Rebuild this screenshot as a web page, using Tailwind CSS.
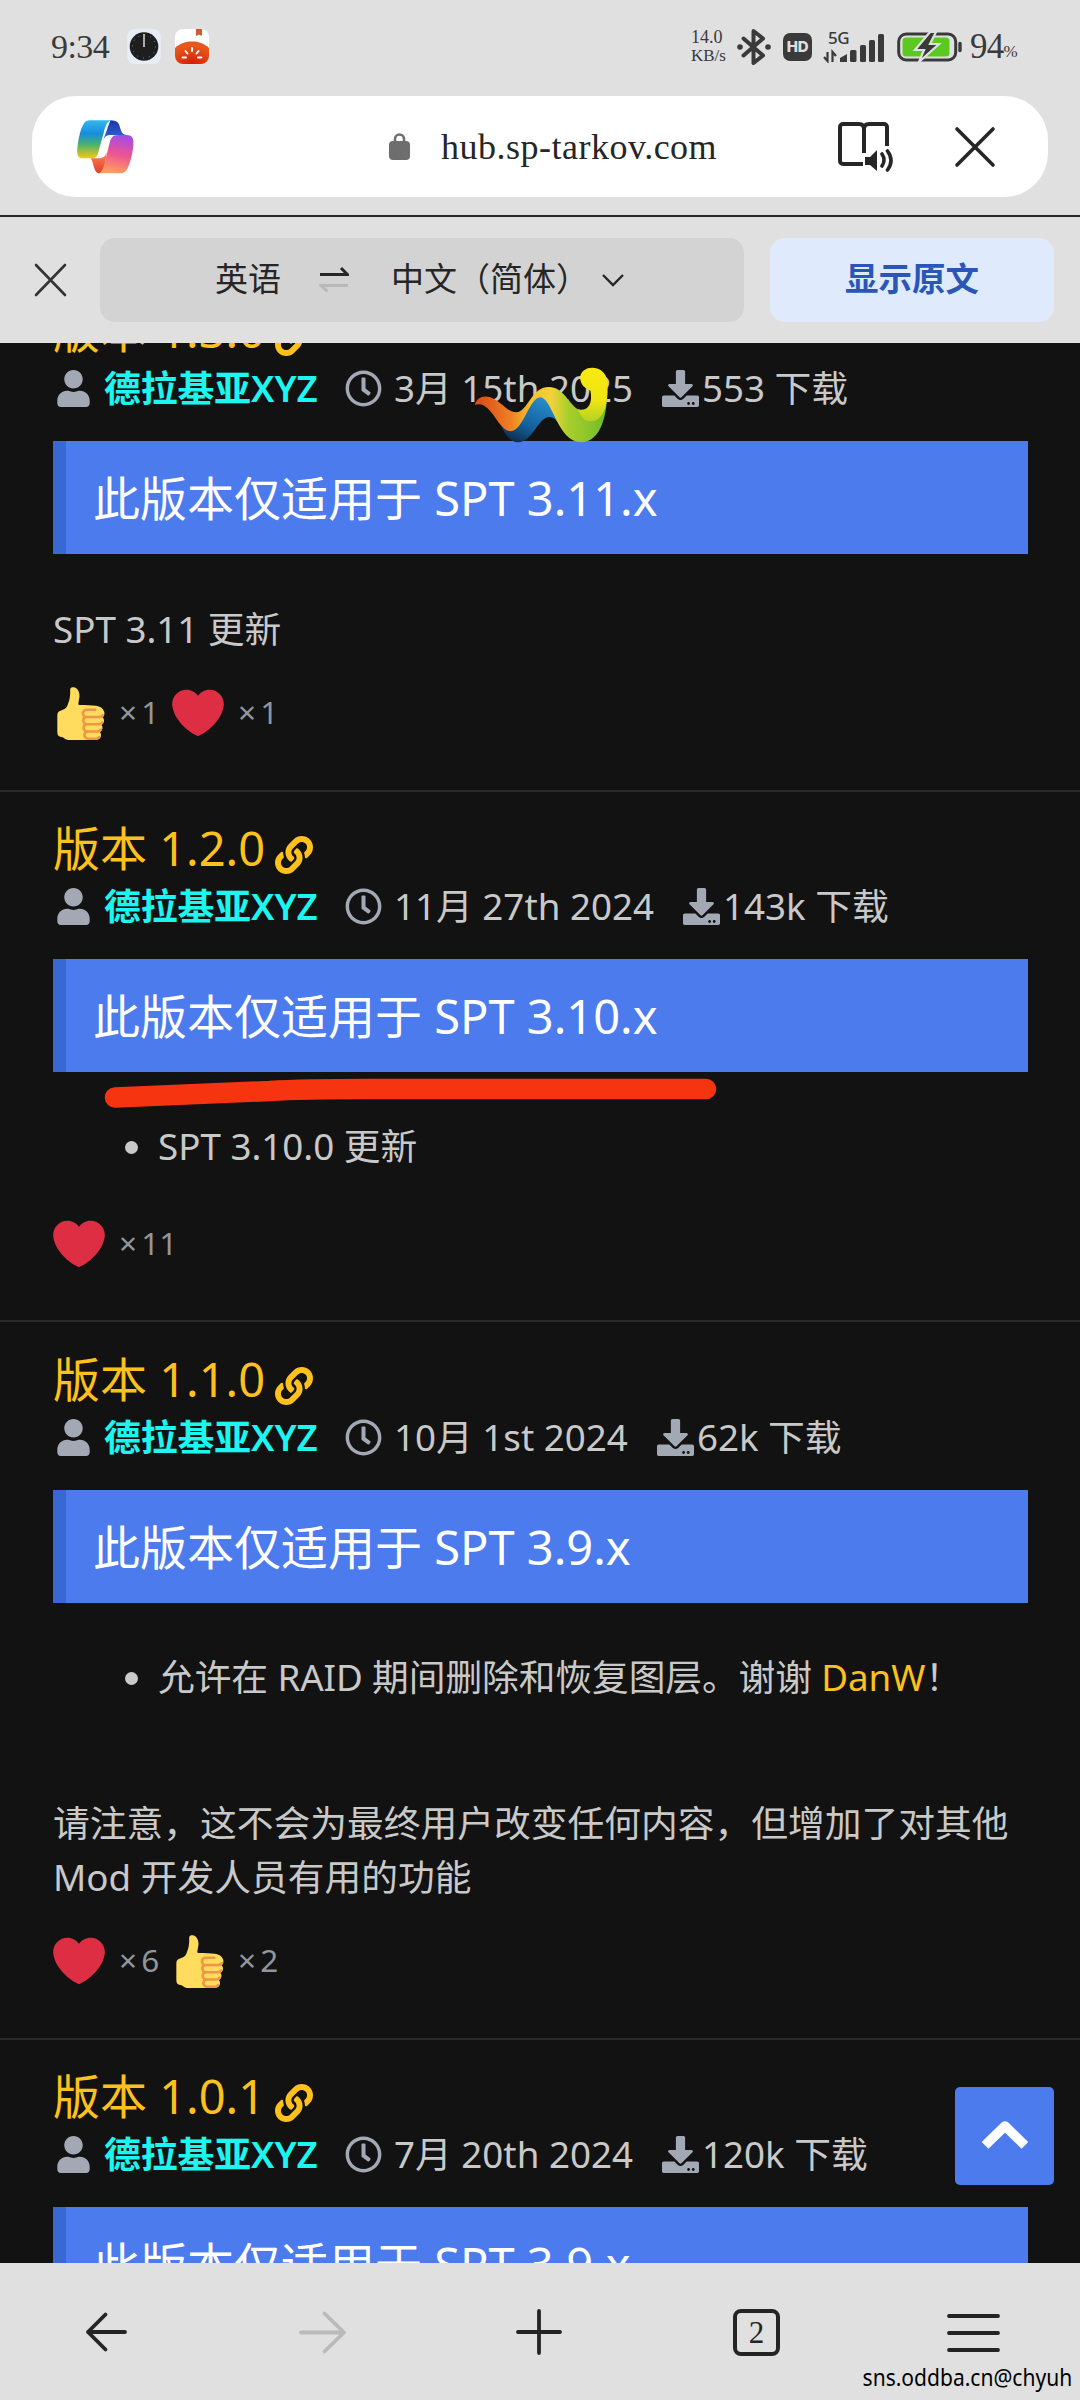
<!DOCTYPE html>
<html lang="zh-CN">
<head>
<meta charset="utf-8">
<title>hub.sp-tarkov.com</title>
<script src="https://cdn.jsdelivr.net/npm/@tailwindcss/browser@4"></script>
</head>
<body class="bg-[#121212]">
<!-- shared icons -->
<svg class="hidden">
  <symbol id="user" viewBox="0 0 448 512"><path fill="currentColor" d="M224 256c70.7 0 128-57.3 128-128S294.7 0 224 0 96 57.3 96 128s57.3 128 128 128zm89.6 32h-16.7c-22.2 10.2-46.9 16-72.9 16s-50.6-5.8-72.9-16h-16.7C60.2 288 0 348.2 0 422.4V464c0 26.5 21.5 48 48 48h352c26.5 0 48-21.5 48-48v-41.6c0-74.2-60.2-134.4-134.4-134.4z"/></symbol>
  <symbol id="clock" viewBox="0 0 512 512"><path fill="currentColor" d="M256 8C119 8 8 119 8 256s111 248 248 248 248-111 248-248S393 8 256 8zm0 448c-110.5 0-200-89.5-200-200S145.5 56 256 56s200 89.5 200 200-89.5 200-200 200zm61.8-104.4l-84.9-61.7c-3.1-2.3-4.9-5.9-4.9-9.7V116c0-6.6 5.4-12 12-12h32c6.6 0 12 5.4 12 12v141.7l66.8 48.6c5.4 3.9 6.5 11.4 2.6 16.8L334.6 349c-3.9 5.3-11.4 6.5-16.8 2.6z"/></symbol>
  <symbol id="download" viewBox="0 0 512 512"><path fill="currentColor" d="M216 0h80c13.3 0 24 10.7 24 24v168h87.7c17.8 0 26.7 21.5 14.1 34.1L269.7 378.3c-7.5 7.5-19.8 7.5-27.3 0L90.1 226.1c-12.6-12.6-3.7-34.1 14.1-34.1H192V24c0-13.3 10.7-24 24-24zm296 376v112c0 13.3-10.7 24-24 24H24c-13.3 0-24-10.7-24-24V376c0-13.3 10.7-24 24-24h146.7l49 49c20.1 20.1 52.5 20.1 72.6 0l49-49H488c13.3 0 24 10.7 24 24zm-124 88c0-11-9-20-20-20s-20 9-20 20 9 20 20 20 20-9 20-20zm64 0c0-11-9-20-20-20s-20 9-20 20 9 20 20 20 20-9 20-20z"/></symbol>
  <symbol id="link" viewBox="0 0 512 512"><path fill="currentColor" d="M326.612 185.391c59.747 59.809 58.927 155.698.36 214.59-.11.12-.24.25-.36.37l-67.2 67.2c-59.27 59.27-155.699 59.262-214.96 0-59.27-59.26-59.27-155.7 0-214.96l37.106-37.106c9.84-9.84 26.786-3.3 27.294 10.606.648 17.722 3.826 35.527 9.69 52.721 1.986 5.822.567 12.262-3.783 16.612l-13.087 13.087c-28.026 28.026-28.905 73.66-1.155 101.96 28.024 28.579 74.086 28.749 102.325.51l67.2-67.19c28.191-28.191 28.073-73.757 0-101.83-3.701-3.694-7.429-6.564-10.341-8.569a16.037 16.037 0 0 1-6.947-12.606c-.396-10.567 3.348-21.456 11.698-29.806l21.054-21.055c5.521-5.521 14.182-6.199 20.584-1.731a152.482 152.482 0 0 1 20.522 17.197zM467.547 44.449c-59.261-59.262-155.69-59.27-214.96 0l-67.2 67.2c-.12.12-.25.25-.36.37-58.566 58.892-59.387 154.781.36 214.59a152.454 152.454 0 0 0 20.521 17.196c6.402 4.468 15.064 3.789 20.584-1.731l21.054-21.055c8.35-8.35 12.094-19.239 11.698-29.806a16.037 16.037 0 0 0-6.947-12.606c-2.912-2.005-6.64-4.875-10.341-8.569-28.073-28.073-28.191-73.639 0-101.83l67.2-67.19c28.239-28.239 74.3-28.069 102.325.51 27.75 28.3 26.872 73.934-1.155 101.96l-13.087 13.087c-4.35 4.35-5.769 10.79-3.783 16.612 5.864 17.194 9.042 34.999 9.69 52.721.509 13.906 17.454 20.446 27.294 10.606l37.106-37.106c59.271-59.259 59.271-155.699.001-214.959z"/></symbol>
  <symbol id="heart" viewBox="0 0 36 36"><path fill="#DD2E44" d="M35.885 11.833c0-5.45-4.418-9.868-9.867-9.868-3.308 0-6.227 1.633-8.018 4.129-1.791-2.496-4.71-4.129-8.017-4.129-5.45 0-9.868 4.417-9.868 9.868 0 .772.098 1.52.266 2.241C1.751 22.587 11.216 31.568 18 34.034c6.783-2.466 16.249-11.447 17.617-19.959.17-.721.268-1.469.268-2.242z"/></symbol>
  <symbol id="thumb" viewBox="0 0 36 36"><path fill="#FFDB5E" d="M34.956 17.916c0-.503-.12-.975-.321-1.404-1.341-4.326-7.619-4.01-16.549-4.221-1.493-.035-.639-1.798-.115-5.668.341-2.517-1.282-6.382-4.01-6.382-4.498 0-.171 3.548-4.148 12.322-2.125 4.688-6.875 2.062-6.875 6.771v10.719c0 1.833.18 3.595 2.758 3.885C8.195 34.219 7.633 36 11.238 36h18.044c1.838 0 3.333-1.496 3.333-3.334 0-.762-.267-1.456-.698-2.018 1.02-.571 1.72-1.649 1.72-2.899 0-.76-.266-1.454-.696-2.015 1.023-.57 1.725-1.649 1.725-2.901 0-.909-.368-1.733-.961-2.336.757-.611 1.251-1.535 1.251-2.581z"/><path fill="#EE9547" d="M23.02 21.249h8.604c1.17 0 2.268-.626 2.866-1.633.246-.415.109-.952-.307-1.199-.415-.247-.952-.108-1.199.307-.283.479-.806.775-1.361.775h-8.81c-.873 0-1.583-.71-1.583-1.583s.71-1.583 1.583-1.583H28.7c.483 0 .875-.392.875-.875s-.392-.875-.875-.875h-5.888c-1.838 0-3.333 1.495-3.333 3.333 0 1.025.475 1.932 1.205 2.544-.615.605-.998 1.445-.998 2.373 0 1.028.478 1.938 1.212 2.549-.611.604-.99 1.441-.99 2.367 0 1.12.559 2.108 1.409 2.713-.524.589-.852 1.356-.852 2.204 0 1.838 1.495 3.333 3.333 3.333h5.484c1.17 0 2.269-.625 2.867-1.632.247-.415.11-.952-.305-1.199-.416-.245-.953-.11-1.199.305-.285.479-.808.776-1.363.776h-5.484c-.873 0-1.583-.71-1.583-1.583s.71-1.583 1.583-1.583h6.506c1.17 0 2.27-.626 2.867-1.633.247-.416.11-.953-.305-1.199-.419-.251-.954-.11-1.199.305-.289.487-.799.777-1.363.777h-7.063c-.873 0-1.583-.711-1.583-1.584s.71-1.583 1.583-1.583h8.091c1.17 0 2.269-.625 2.867-1.632.247-.415.11-.952-.305-1.199-.417-.246-.953-.11-1.199.305-.289.486-.799.776-1.363.776H23.02c-.873 0-1.583-.71-1.583-1.583s.709-1.584 1.583-1.584z"/></symbol>
</svg>

<div class="relative flex h-[2400px] w-[1080px] flex-col overflow-hidden bg-[#121212] font-['Noto_Sans','Noto_Sans_CJK_SC',sans-serif] text-[36.75px] leading-[54px] text-[#c9c9c9]">

  <header class="relative z-10 flex h-[343px] shrink-0 flex-col bg-[#e0e0e0] font-['Liberation_Serif','Noto_Sans_CJK_SC',serif] text-[#262626]">
    <!-- status bar -->
    <div class="flex h-[93px] shrink-0 items-center pl-[51px] text-[#3a3a3a]">
      <span class="w-[76px] text-[34px] tracking-[-0.6px]">9:34</span>
      <svg class="h-[35px] w-[34px]" viewBox="0 0 34 35"><rect width="34" height="35" rx="8" fill="#e6edf6"/><circle cx="17" cy="17.5" r="14.3" fill="#1e1e20"/><circle cx="17" cy="17.5" r="11.5" fill="none" stroke="#8a8a8a" stroke-width="1" stroke-dasharray="1 5.02"/><path d="M17 5v13" stroke="#aaa" stroke-width="2"/></svg>
      <svg class="ml-[14px] h-[35px] w-[34px]" viewBox="0 0 34 35"><defs><radialGradient id="tomato" cx=".5" cy="1" r=".8"><stop offset="0" stop-color="#d41c06"/><stop offset="1" stop-color="#e8581c"/></radialGradient></defs><rect width="34" height="35" rx="8" fill="#fff"/><path d="M0 19C5 14 11 12.500 17 12.500S29 14 34 19v8a8 8 0 0 1-8 8H8a8 8 0 0 1-8-8z" fill="url(#tomato)"/><path d="M21 0h6v7l-3-1.500-3 1.500z" fill="#cd5a35"/><path d="M17 19v3M10.500 22l2 2.500M23.500 22l-2 2.500M7.500 28.500h3.500M26.500 28.500H23" stroke="#fff" stroke-width="2" stroke-linecap="round"/></svg>
      <div class="ml-[482px] w-[46px] text-[18px] leading-[18.5px]"><div>14.0</div><div class="text-[17px]">KB/s</div></div>
      <svg class="h-[36px] w-[34px]" viewBox="0 0 34 36"><path d="M6.500 9.500L26 26.500 16.500 34V2L26 9.500 6.500 26.500" fill="none" stroke="#3a3a3a" stroke-width="4" stroke-linejoin="round" stroke-linecap="round"/><circle cx="3" cy="18" r="2.800" fill="#3a3a3a"/><circle cx="31" cy="18" r="2.800" fill="#3a3a3a"/></svg>
      <span class="ml-[12px] flex h-[28px] w-[29px] items-center justify-center rounded-[7px] bg-[#3a3a3a] font-['Inter',sans-serif] text-[15px] font-extrabold leading-none tracking-[-0.3px] text-[#e0e0e0]">HD</span>
      <div class="relative ml-[11px] h-[32px] w-[62px]">
        <svg class="h-[32px] w-[62px]" viewBox="0 0 62 32"><g fill="#3a3a3a"><path d="M17 31v-4l7-4v8z"/><rect x="27" y="19" width="6.500" height="12" rx="1.500"/><rect x="37" y="14" width="6" height="17" rx="1.500"/><rect x="46" y="9" width="6" height="22" rx="1.500"/><rect x="55" y="3" width="6" height="28" rx="1.500"/></g><path d="M1 26l3.500 4V21M13 25l-3.500-4v10" fill="none" stroke="#3a3a3a" stroke-width="2.200"/></svg>
        <span class="absolute left-[5px] top-[-2px] font-['Noto_Sans',sans-serif] text-[17px] font-medium leading-[18px] tracking-[-0.5px]">5G</span>
      </div>
      <svg class="ml-[12px] h-[30px] w-[66px]" viewBox="0 0 66 30"><rect x="1.700" y="2" width="57" height="26" rx="7.500" fill="none" stroke="#3a3a3a" stroke-width="3"/><path d="M63 11.500v7" stroke="#3a3a3a" stroke-width="3.400" stroke-linecap="round"/><rect x="5.500" y="5.500" width="47" height="19" rx="3.500" fill="#5cc920"/><path d="M33 0L18 18h9l-5 12 20-18h-9l6-12z" fill="#3a3a3a" stroke="#e0e0e0" stroke-width="2.200"/></svg>
      <span class="ml-[7px] text-[35px] tracking-[-0.8px]">94</span><span class="mt-[10px] text-[17px]">%</span>
    </div>

    <!-- address bar -->
    <div class="mx-[32px] mt-[3px] flex h-[101px] shrink-0 items-center rounded-[44px] bg-white pl-[45px]">
      <svg class="h-[54px] w-[57px]" viewBox="223 359 169 162" preserveAspectRatio="none">
        <defs>
          <linearGradient id="c1" x1="0" y1="0" x2="0" y2="1"><stop offset="0" stop-color="#35b8ee"/><stop offset=".35" stop-color="#168ddc"/><stop offset=".65" stop-color="#4fb36a"/><stop offset="1" stop-color="#fbc70a"/></linearGradient>
          <linearGradient id="c2" x1="0" y1="0" x2="0" y2="1"><stop offset="0" stop-color="#1c37a6"/><stop offset="1" stop-color="#2d6be0"/></linearGradient>
          <linearGradient id="c3" x1=".6" y1="0" x2=".4" y2="1"><stop offset="0" stop-color="#a44be6"/><stop offset=".5" stop-color="#ee5590"/><stop offset="1" stop-color="#ffa35c"/></linearGradient>
          <linearGradient id="c4" x1="0" y1="0" x2="0" y2="1"><stop offset="0" stop-color="#ff8450"/><stop offset="1" stop-color="#e23c2c"/></linearGradient>
        </defs>
        <path d="M322 360c24 0 26 12 30 26 3 10 6 16 18 18h-45c-14 0-19 2-26 20z" fill="url(#c2)"/>
        <path d="M262 360h64c-14 2-19 18-24 38l-13 48c-5 20-8 28-22 28h-27c-15 0-18-12-16-32 4-32 10-56 18-70 6-10 11-12 20-12z" fill="url(#c1)"/>
        <path d="M264 474h22c14 0 20-4 26-18l-8 45c-3 14-8 18-17 18-15-3-15-34-23-45z" fill="url(#c4)"/>
        <path d="M345 404h25c18 0 22 11 20 32-3 29-10 54-18 69-5 11-13 14-24 14h-63c13-1 17-20 22-38l11-46c5-22 9-31 27-31z" fill="url(#c3)"/>
      </svg>
      <svg class="ml-[255px] h-[27px] w-[21px]" viewBox="0 0 21 27"><path d="M6 11V6a4.500 4.500 0 0 1 9 0v5" fill="none" stroke="#6e6e6e" stroke-width="2.600"/><rect y="8" width="21" height="19" rx="4" fill="#6e6e6e"/></svg>
      <span class="ml-[31px] w-[275px] whitespace-nowrap text-[36px] tracking-[0.5px]">hub.sp-tarkov.com</span>
      <svg class="ml-[122px] h-[50px] w-[56px]" viewBox="0 0 56 50" fill="none" stroke="#262626" stroke-width="4"><path d="M25 42H5a3 3 0 0 1-3-3V5a3 3 0 0 1 3-3h16q5 0 5 5v24M26 7q0-5 5-5h15a3 3 0 0 1 3 3v19"/><path d="M27 35h5l7-7v21l-7-6h-5z" fill="#262626" stroke="none"/><path d="M44 32q4 6 0 12M49.500 29q7 9.500 0 19" stroke-width="3.600" stroke-linecap="round"/></svg>
      <svg class="ml-[60px] h-[42px] w-[42px]" viewBox="0 0 42 42"><path d="M3 3l36 36M39 3L3 39" stroke="#262626" stroke-width="3.600" stroke-linecap="round"/></svg>
    </div>

    <!-- translation bar -->
    <div class="mt-[18px] flex h-[128px] shrink-0 items-center border-t-2 border-[#2a2a2a] pl-[34px] text-[33px]">
      <svg class="h-[34px] w-[34px]" viewBox="0 0 34 34"><path d="M2 2l29 30M31 2L2 32" stroke="#333" stroke-width="2.600" stroke-linecap="round"/></svg>
      <div class="ml-[32px] flex h-[84px] w-[644px] items-center rounded-[15px] bg-[#d3d3d3] pl-[115px]">
        <span>英语</span>
        <svg class="ml-[38px] h-[28px] w-[30px]" viewBox="0 0 30 28"><path d="M1 8.500h27.500L22 2" fill="none" stroke="#262626" stroke-width="3"/><path d="M29 19.500H2l6.500 6" fill="none" stroke="#b9b9b9" stroke-width="3"/></svg>
        <span class="ml-[42px]">中文（简体）</span>
        <svg class="ml-[12px] h-[14px] w-[24px]" viewBox="0 0 24 14"><path d="M2 2l10 10L22 2" fill="none" stroke="#262626" stroke-width="2.400"/></svg>
      </div>
      <div class="ml-[26px] flex h-[84px] w-[284px] items-center justify-center rounded-[15px] bg-[#dfebfc] text-[33.500px] font-bold text-[#2a56b8]">显示原文</div>
    </div>
  </header>

  <main class="flex h-[1920px] shrink-0 flex-col overflow-hidden">
    <section class="mt-[-69px] h-[518px] shrink-0 border-b-2 border-[#2a2a2a] pl-[53px] pr-[52px] pt-6">
      <h2 class="flex h-[65px] text-[47px] leading-[64px] text-[#fcc11c]">版本 1.3.0<svg class="ml-[10px] mt-[20px] size-[38px]"><use href="#link"/></svg></h2>
      <div class="flex h-[50px] items-center leading-[50px]"><svg class="ml-1 h-[37px] w-[33px] text-[#a2a9b4]"><use href="#user"/></svg><span class="ml-[14px] w-[213px] whitespace-nowrap font-semibold text-[#1cf5f0]">德拉基亚XYZ</span><svg class="ml-[28px] size-[37px] text-[#a2a9b4]"><use href="#clock"/></svg><span class="ml-[12px]">3月 15th 2025</span><svg class="ml-[29px] size-[37px] text-[#a2a9b4]"><use href="#download"/></svg><span class="ml-[3px]">553 下载</span></div>
      <div class="mt-[28px] flex h-[113px] items-center border-l-[13px] border-[#3968d3] bg-[#4c7bee] pl-[27px] text-[47px] leading-[64px] text-white">此版本仅适用于 SPT 3.11.x</div>
      <p class="mt-[48px]">SPT 3.11 更新</p>
      <div class="mt-[31px] flex h-[52px] items-center text-[31.5px] text-[#90969c]"><svg class="size-[53px]"><use href="#thumb"/></svg><span class="mb-[2px] ml-[13px] w-[53px] [word-spacing:-4px]">× 1</span><svg class="size-[52px]"><use href="#heart"/></svg><span class="mb-[2px] ml-[14px] [word-spacing:-4px]">× 1</span></div>
    </section>

    <section class="h-[530px] shrink-0 border-b-2 border-[#2a2a2a] pl-[53px] pr-[52px] pt-6">
      <h2 class="flex h-[65px] text-[47px] leading-[64px] text-[#fcc11c]">版本 1.2.0<svg class="ml-[10px] mt-[20px] size-[38px]"><use href="#link"/></svg></h2>
      <div class="flex h-[50px] items-center leading-[50px]"><svg class="ml-1 h-[37px] w-[33px] text-[#a2a9b4]"><use href="#user"/></svg><span class="ml-[14px] w-[213px] whitespace-nowrap font-semibold text-[#1cf5f0]">德拉基亚XYZ</span><svg class="ml-[28px] size-[37px] text-[#a2a9b4]"><use href="#clock"/></svg><span class="ml-[12px]">11月 27th 2024</span><svg class="ml-[29px] size-[37px] text-[#a2a9b4]"><use href="#download"/></svg><span class="ml-[3px]">143k 下载</span></div>
      <div class="mt-[28px] flex h-[113px] items-center border-l-[13px] border-[#3968d3] bg-[#4c7bee] pl-[27px] text-[47px] leading-[64px] text-white">此版本仅适用于 SPT 3.10.x</div>
      <ul class="mt-[47px]"><li class="flex items-center pl-[72px]"><i class="mr-[20px] mt-[2px] size-[13px] rounded-full bg-[#c9c9c9]"></i>SPT 3.10.0 更新</li></ul>
      <div class="mt-[45px] flex h-[52px] items-center text-[31.5px] text-[#90969c]"><svg class="size-[52px]"><use href="#heart"/></svg><span class="mb-[2px] ml-[14px] [word-spacing:-4px]">× 11</span></div>
    </section>

    <section class="h-[718px] shrink-0 border-b-2 border-[#2a2a2a] pl-[53px] pr-[52px] pt-[25px]">
      <h2 class="flex h-[65px] text-[47px] leading-[64px] text-[#fcc11c]">版本 1.1.0<svg class="ml-[10px] mt-[20px] size-[38px]"><use href="#link"/></svg></h2>
      <div class="flex h-[50px] items-center leading-[50px]"><svg class="ml-1 h-[37px] w-[33px] text-[#a2a9b4]"><use href="#user"/></svg><span class="ml-[14px] w-[213px] whitespace-nowrap font-semibold text-[#1cf5f0]">德拉基亚XYZ</span><svg class="ml-[28px] size-[37px] text-[#a2a9b4]"><use href="#clock"/></svg><span class="ml-[12px]">10月 1st 2024</span><svg class="ml-[29px] size-[37px] text-[#a2a9b4]"><use href="#download"/></svg><span class="ml-[3px]">62k 下载</span></div>
      <div class="mt-[28px] flex h-[113px] items-center border-l-[13px] border-[#3968d3] bg-[#4c7bee] pl-[27px] text-[47px] leading-[64px] text-white">此版本仅适用于 SPT 3.9.x</div>
      <ul class="mt-[47px]"><li class="flex items-center whitespace-pre pl-[72px] tracking-[-0.1px]"><i class="mr-[20px] mt-[2px] size-[13px] rounded-full bg-[#c9c9c9]"></i>允许在 RAID 期间删除和恢复图层。谢谢 <a class="text-[#fcc11c]">DanW</a>！</li></ul>
      <p class="mt-[92px]">请注意，这不会为最终用户改变任何内容，但增加了对其他<br>Mod 开发人员有用的功能</p>
      <div class="mt-[31px] flex h-[52px] items-center text-[31.5px] text-[#90969c]"><svg class="size-[52px]"><use href="#heart"/></svg><span class="mb-[2px] ml-[14px] w-[53px] [word-spacing:-4px]">× 6</span><svg class="size-[53px]"><use href="#thumb"/></svg><span class="mb-[2px] ml-[13px] [word-spacing:-4px]">× 2</span></div>
    </section>

    <section class="h-[400px] shrink-0 pl-[53px] pr-[52px] pt-6">
      <h2 class="flex h-[65px] text-[47px] leading-[64px] text-[#fcc11c]">版本 1.0.1<svg class="ml-[10px] mt-[20px] size-[38px]"><use href="#link"/></svg></h2>
      <div class="flex h-[50px] items-center leading-[50px]"><svg class="ml-1 h-[37px] w-[33px] text-[#a2a9b4]"><use href="#user"/></svg><span class="ml-[14px] w-[213px] whitespace-nowrap font-semibold text-[#1cf5f0]">德拉基亚XYZ</span><svg class="ml-[28px] size-[37px] text-[#a2a9b4]"><use href="#clock"/></svg><span class="ml-[12px]">7月 20th 2024</span><svg class="ml-[29px] size-[37px] text-[#a2a9b4]"><use href="#download"/></svg><span class="ml-[3px]">120k 下载</span></div>
      <div class="mt-[28px] flex h-[113px] items-center border-l-[13px] border-[#3968d3] bg-[#4c7bee] pl-[27px] text-[47px] leading-[64px] text-white">此版本仅适用于 SPT 3.9.x</div>
    </section>
  </main>

  <!-- bottom toolbar -->
  <nav class="flex h-[137px] shrink-0 items-start bg-[#e0e0e0] pl-[84px] pt-[45px] text-[#242424]">
    <svg class="h-[48px] w-[46px]" viewBox="0 0 46 48" fill="none" stroke="currentColor" stroke-width="3.800" stroke-linecap="round" stroke-linejoin="round"><path d="M41 24H4M21.500 6.500L4 24l17.500 17.500"/></svg>
    <svg class="ml-[167px] h-[48px] w-[51px]" viewBox="0 0 51 48" fill="none" stroke="#bababa" stroke-width="3.800" stroke-linecap="round" stroke-linejoin="round"><path d="M4 24.500h43M27.500 5.500L47 24.500l-19.500 19"/></svg>
    <svg class="ml-[167px] h-[48px] w-[48px]" viewBox="0 0 48 48" stroke="currentColor" stroke-width="3.800" stroke-linecap="round"><path d="M24 3v42M3 24h42"/></svg>
    <span class="ml-[170px] mt-[1px] flex h-[47px] w-[47px] items-center justify-center rounded-[8px] border-[4px] border-[#242424] font-['Liberation_Serif',serif] text-[31px] leading-none">2</span>
    <svg class="ml-[166px] h-[48px] w-[55px]" viewBox="0 0 55 48" stroke="currentColor" stroke-width="3.800" stroke-linecap="round"><path d="M3 8h49M3 25h49M3 42h49"/></svg>
  </nav>

  <!-- floating items over the page -->
  <svg class="absolute left-[474px] top-[367px] h-[76px] w-[134px]" viewBox="83 112 328 228" preserveAspectRatio="none">
    <defs>
      <linearGradient id="w1" gradientUnits="userSpaceOnUse" x1="85" y1="0" x2="410" y2="0"><stop offset="0" stop-color="#d9481a"/><stop offset=".27" stop-color="#f07f22"/><stop offset=".42" stop-color="#f5c02e"/><stop offset=".58" stop-color="#f2d23a"/><stop offset=".7" stop-color="#a9cf2a"/><stop offset="1" stop-color="#6fbb2c"/></linearGradient>
      <linearGradient id="w2" x1=".7" y1="0" x2=".1" y2="1"><stop offset="0" stop-color="#2b93cf"/><stop offset=".6" stop-color="#14619f"/><stop offset="1" stop-color="#0c2340"/></linearGradient>
      <linearGradient id="w3" x1="0" y1="0" x2="0" y2="1"><stop offset="0" stop-color="#f8ea10"/><stop offset=".6" stop-color="#f0e414"/><stop offset="1" stop-color="#b4d322"/></linearGradient>
    </defs>
    <path d="M150 290C165 330 178 338 192 338c35-2 48-76 76-76 12 0 18 12 30 30l-20-90-40-12-58 100z" fill="url(#w2)"/>
    <path d="M85 226C88 206 104 196 121 202c30 12 42 46 66 46 28-2 36-76 79-76 42 0 52 68 82 70 22 0 24-26 22-48l39-24c2 60-8 168-64 168-58 0-70-135-100-135-26 0-42 102-72 102-32 0-48-96-88-79z" fill="url(#w1)"/>
    <path d="M343 143c2-40 62-40 66 12 3 50-2 120-42 120-14 0-22-14-30-36 30 8 36-26 31-56-16-8-25-20-25-40z" fill="url(#w3)"/>
  </svg>
  <svg class="absolute left-[100px] top-[1074px] h-[40px] w-[620px]" viewBox="0 0 620 40"><path d="M15 23.500C70 21 120 19 170 17q30-2 100-2h336" fill="none" stroke="#f63410" stroke-width="20.500" stroke-linecap="round"/></svg>
  <div class="absolute left-[955px] top-[2087px] flex h-[98px] w-[99px] items-center justify-center rounded-[5px] bg-[#4c7bee]">
    <svg class="mb-[4px] h-[32px] w-[48px]" viewBox="0 0 48 32"><path d="M7.500 24L24 8l16.500 16" fill="none" stroke="#fff" stroke-width="9.500" stroke-linejoin="round" stroke-linecap="square"/></svg>
  </div>
  <span class="absolute right-[8px] top-[2361px] origin-right scale-x-[0.895] text-[23.5px] leading-[32px] text-black">sns.oddba.cn@chyuh</span>
</div>
</body>
</html>
